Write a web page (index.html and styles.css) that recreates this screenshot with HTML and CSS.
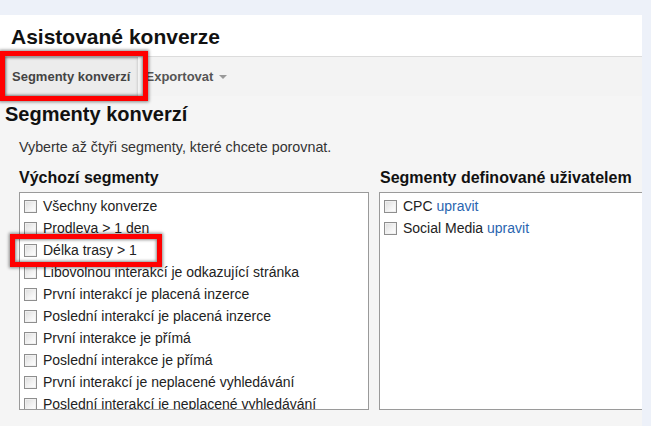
FILE: index.html
```html
<!DOCTYPE html>
<html lang="cs">
<head>
<meta charset="utf-8">
<title>Asistované konverze</title>
<link rel="stylesheet" href="styles.css">
</head>
<body>
<div class="page">
  <div class="header">
    <h1 class="title">Asistované konverze</h1>
  </div>
  <div class="toolbar">
    <span class="tab active">Segmenty konverzí</span>
    <span class="tab menu">Exportovat <span class="caret"></span></span>
  </div>
  <div class="content">
    <h2 class="heading">Segmenty konverzí</h2>
    <p class="desc">Vyberte až čtyři segmenty, které chcete porovnat.</p>
    <div class="columns">
      <div class="col col-left">
        <h3 class="col-title">Výchozí segmenty</h3>
        <div class="box">
          <div class="row"><span class="cb"></span>Všechny konverze</div>
          <div class="row"><span class="cb"></span>Prodleva &gt; 1 den</div>
          <div class="row"><span class="cb"></span>Délka trasy &gt; 1</div>
          <div class="row"><span class="cb"></span>Libovolnou interakcí je odkazující stránka</div>
          <div class="row"><span class="cb"></span>První interakcí je placená inzerce</div>
          <div class="row"><span class="cb"></span>Poslední interakcí je placená inzerce</div>
          <div class="row"><span class="cb"></span>První interakce je přímá</div>
          <div class="row"><span class="cb"></span>Poslední interakce je přímá</div>
          <div class="row"><span class="cb"></span>První interakcí je neplacené vyhledávání</div>
          <div class="row"><span class="cb"></span>Poslední interakcí je neplacené vyhledávání</div>
        </div>
      </div>
      <div class="col col-right">
        <h3 class="col-title">Segmenty definované uživatelem</h3>
        <div class="box">
          <div class="row"><span class="cb"></span>CPC&nbsp;<a class="link" href="#">upravit</a></div>
          <div class="row"><span class="cb"></span>Social Media&nbsp;<a class="link" href="#">upravit</a></div>
        </div>
      </div>
    </div>
  </div>
  <div class="mark mark-tab"></div>
  <div class="mark mark-row"></div>
</div>
</body>
</html>
```
FILE: styles.css
```css
html, body {
  margin: 0;
  padding: 0;
}
body {
  background: #edf1f9;
  font-family: "Liberation Sans", Arial, sans-serif;
  color: #222;
  height: 426px;
  overflow: hidden;
}
.page {
  position: relative;
  width: 642px;
  margin-top: 15px;
  height: 411px;
  overflow: hidden;
  background: #f5f5f5;
}
.header {
  background: #fff;
  height: 41px;
  border-bottom: 1px solid #dcdcdc;
  display: flex;
  align-items: center;
  padding-left: 11px;
}
.title {
  margin: 0;
  font-size: 21px;
  font-weight: bold;
  color: #111;
  line-height: 24px;
  padding-top: 2px;
}
.toolbar {
  height: 39px;
  background: #f3f3f3;
  display: flex;
  align-items: center;
  padding-left: 5px;
}
.tab {
  font-size: 13px;
  font-weight: bold;
  color: #555;
  line-height: 16px;
}
.tab.active {
  color: #444;
  background: #ececec;
  padding: 12px 7px 11px 7px;
  box-shadow: inset 0 1px 3px rgba(0,0,0,0.25);
}
.tab.menu {
  margin-left: 8px;
  display: flex;
  align-items: center;
}
.caret {
  display: inline-block;
  width: 0;
  height: 0;
  border-left: 4px solid transparent;
  border-right: 4px solid transparent;
  border-top: 4px solid #999;
  margin-left: 6px;
  margin-top: 1px;
}
.content {
  padding-top: 6px;
}
.heading {
  margin: 0 0 0 5px;
  font-size: 20px;
  line-height: 24px;
  font-weight: bold;
  color: #111;
}
.desc {
  margin: 13px 0 0 19px;
  font-size: 14.3px;
  line-height: 17px;
  color: #333;
}
.columns {
  display: flex;
  gap: 10px;
  margin-top: 12px;
  padding-left: 19px;
}
.col-left {
  width: 350px;
  flex: none;
}
.col-right {
  width: 290px;
  flex: none;
}
.col-title {
  margin: 0 0 5px 0;
  font-size: 16px;
  line-height: 19px;
  font-weight: bold;
  color: #111;
}
.col-right .col-title {
  padding-left: 1px;
}
.box {
  background: #fff;
  border: 1px solid #9a9a9a;
  height: 214px;
  overflow: hidden;
  padding: 2px 0 0 4px;
  box-sizing: content-box;
}
.row {
  height: 22px;
  display: flex;
  align-items: center;
  font-size: 14px;
  color: #222;
  white-space: nowrap;
}
.cb {
  width: 11px;
  height: 11px;
  border: 1px solid #8e8e8e;
  background: linear-gradient(135deg, #dcdcdc 0%, #f4f4f4 60%, #fff 100%);
  box-shadow: inset 0 0 0 1px #f0f0f0;
  margin-right: 6px;
  flex: none;
}
.link {
  color: #2a65b0;
  text-decoration: none;
}
.mark {
  position: absolute;
  border: 5px solid #f00;
  box-shadow: 0 0 3px 1px rgba(0,0,0,0.45), inset 0 0 3px 1px rgba(0,0,0,0.45);
  box-sizing: border-box;
}
.mark-tab {
  left: 0;
  top: 36px;
  width: 148px;
  height: 50px;
}
.mark-row {
  left: 10px;
  top: 219px;
  width: 152px;
  height: 33px;
}
```
